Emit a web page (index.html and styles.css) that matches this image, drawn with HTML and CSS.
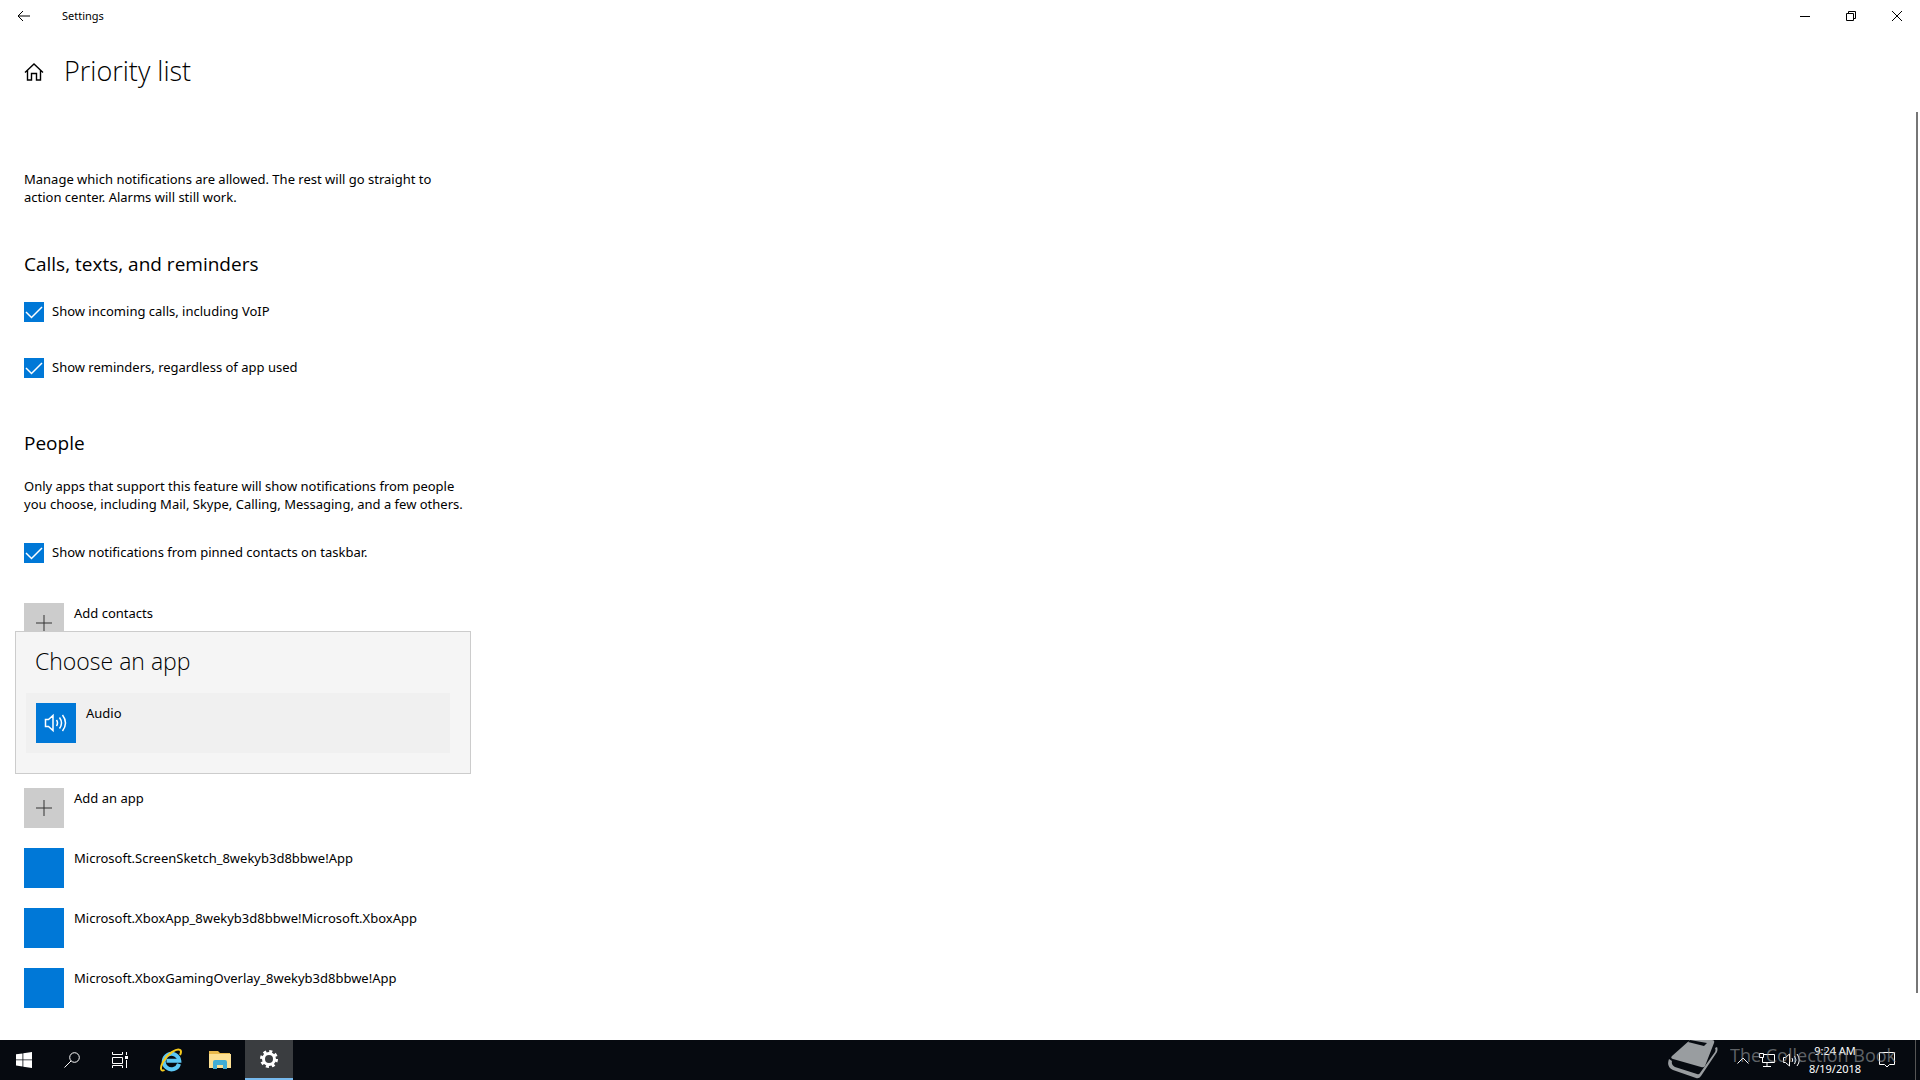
FILE: index.html
```html
<!doctype html>
<html lang="en">
<head>
  <meta charset="UTF-8">
  <meta name="viewport" content="width=device-width, initial-scale=1">
  <title>Settings</title>
  <link rel="stylesheet" href="styles.css">
</head>
<body>
  <div class="window">
    <header class="titlebar">
      <button class="back" aria-label="Back">
        <svg width="14" height="12" viewBox="0 0 14 12"><path d="M13 6H1M6 1L1 6l5 5"/></svg>
      </button>
      <span class="app-name">Settings</span>
      <div class="window-buttons">
        <button aria-label="Minimize">
          <svg width="10" height="10" viewBox="0 0 10 10"><path d="M0 5.500h10"/></svg>
        </button>
        <button aria-label="Restore">
          <svg width="10" height="10" viewBox="0 0 10 10"><path d="M.5 2.500h7v7h-7zM2.500 2.500V.5h7v7h-2"/></svg>
        </button>
        <button aria-label="Close">
          <svg width="10" height="10" viewBox="0 0 10 10"><path d="M0 0l10 10M10 0L0 10"/></svg>
        </button>
      </div>
    </header>

    <div class="page-head">
      <a class="home" href="#" aria-label="Home">
        <svg width="20" height="20" viewBox="0 0 20 20"><path d="M1 10.500L10 2l9 8.500M3.500 8.500v9.500h4v-6.500h5V18h4V8.500"/></svg>
      </a>
      <h1>Priority list</h1>
    </div>

    <div class="scroll-area">
      <main class="content">
        <p>Manage which notifications are allowed. The rest will go straight to action center. Alarms will still work.</p>

        <section class="calls">
          <h2>Calls, texts, and reminders</h2>
          <div class="check">
            <input type="checkbox" id="calls" checked>
            <label for="calls">Show incoming calls, including VoIP</label>
          </div>
          <div class="check">
            <input type="checkbox" id="reminders" checked>
            <label for="reminders">Show reminders, regardless of app used</label>
          </div>
        </section>

        <section class="people">
          <h2>People</h2>
          <p>Only apps that support this feature will show notifications from people you choose, including Mail, Skype, Calling, Messaging, and a few others.</p>
          <div class="check">
            <input type="checkbox" id="pinned" checked>
            <label for="pinned">Show notifications from pinned contacts on taskbar.</label>
          </div>
          <button class="item">
            <span class="tile add"><svg width="16" height="16" viewBox="0 0 16 16"><path d="M8 0v16M0 8h16"/></svg></span>
            <span class="name">Add contacts</span>
          </button>
        </section>

        <section class="apps">
          <button class="item">
            <span class="tile add"><svg width="16" height="16" viewBox="0 0 16 16"><path d="M8 0v16M0 8h16"/></svg></span>
            <span class="name">Add an app</span>
          </button>
          <button class="item"><span class="tile"></span><span class="name">Microsoft.ScreenSketch_8wekyb3d8bbwe!App</span></button>
          <button class="item"><span class="tile"></span><span class="name">Microsoft.XboxApp_8wekyb3d8bbwe!Microsoft.XboxApp</span></button>
          <button class="item"><span class="tile"></span><span class="name">Microsoft.XboxGamingOverlay_8wekyb3d8bbwe!App</span></button>

          <!-- app picker, opens above the Add an app button -->
          <div class="picker" role="dialog" aria-labelledby="picker-title">
            <h3 id="picker-title">Choose an app</h3>
            <button class="item">
              <span class="tile audio">
                <svg width="24" height="20" viewBox="0 0 24 20"><path d="M1.500 6.500h3L9 2.500v15l-4.500-4H1.500zM12.500 7q2 3 0 6M15.500 4.500q4 5.500 0 11M18.500 2q6 8 0 16"/></svg>
              </span>
              <span class="name">Audio</span>
            </button>
          </div>
        </section>
      </main>
      <div class="scrollbar"></div>
    </div>
  </div>

  <footer class="taskbar">
    <div class="tasks">
      <button aria-label="Start">
        <svg width="16" height="16" viewBox="0 0 16 16"><path class="solid" d="M0 2.300L6.500 1.400V7.500H0zM7.300 1.300L16 0v7.500H7.300zM0 8.300h6.500v6.200L0 13.600zM7.300 8.300H16V16l-8.700-1.300z"/></svg>
      </button>
      <button aria-label="Search">
        <svg width="16" height="16" viewBox="0 0 16 16"><circle cx="10.500" cy="5.500" r="4.800"/><path d="M7 9L.5 15.500"/></svg>
      </button>
      <button aria-label="Task View">
        <svg width="16" height="16" viewBox="0 0 16 16"><path d="M.5 0v2.500h10V0M.5 5.500h10v6H.5zM.5 16v-2.500h10V16M14.500 0v3M14.500 8v8"/><path class="solid" d="M13 4h3v3h-3z"/></svg>
      </button>
      <div class="pinned">
        <button aria-label="Internet Explorer">
          <svg width="24" height="24" viewBox="0 0 24 24">
            <path class="ie" d="M20 15.800A7.800 7.800 0 1 1 20.300 12.800H7.500"/>
            <path class="ring" d="M5.500 22C2 24 .5 20.500 4 14 9 5 18 0 21 2q2 1 0 5"/>
          </svg>
        </button>
        <button aria-label="File Explorer">
          <svg width="22" height="20" viewBox="0 0 22 20">
            <path fill="#e8b94c" stroke="none" d="M0 1h9l2 2h10v4H0z"/>
            <path fill="#fce093" stroke="none" d="M0 4h22v14H0z"/>
            <path fill="#42add4" stroke="none" d="M4 19v-7q0-2 2-2h10q2 0 2 2v7h-4v-4H8v4z"/>
          </svg>
        </button>
        <button class="active" aria-label="Settings">
          <svg width="18" height="18" viewBox="0 0 18 18"><circle class="gear" cx="9" cy="9" r="5.500"/><circle class="teeth" cx="9" cy="9" r="7.500"/></svg>
        </button>
      </div>
    </div>
    <div class="tray">
      <button class="tray-up" aria-label="Show hidden icons">
        <svg width="12" height="7" viewBox="0 0 12 7"><path d="M.5 6.500L6 1l5.500 5.500"/></svg>
      </button>
      <button aria-label="Network">
        <svg width="16" height="14" viewBox="0 0 16 14"><path d="M4.500 1.500h11v8H3.500V5M.5.5h4v4h-4zM4 13.500h8M8 10v3"/></svg>
      </button>
      <button aria-label="Volume">
        <svg width="17" height="14" viewBox="0 0 17 14"><path d="M.5 4.500h2l4-3.500v12l-4-3.500h-2zM9 5q1.500 2 0 4M11.500 3q3 4 0 8M14 1q4.500 6 0 12"/></svg>
      </button>
      <button class="clock">9:24 AM<br>8/19/2018</button>
      <button class="notes" aria-label="Action center">
        <svg width="16" height="16" viewBox="0 0 16 16"><path d="M.5.5h15v12h-5L8 15l-2.500-2.500h-5z"/></svg>
      </button>
      <div class="show-desktop"></div>
    </div>
    <div class="watermark">
      <svg width="50" height="39" viewBox="0 0 50 39">
        <path d="M22 0h22q3 0 2 3l-9 23q-1 2-4 1L5 19q-3-1-1-3z"/>
        <path d="M1 19Q-2 27 5 30l23 8q3 1 5-2L49 12q1-3 0-5l-2 1q1 2 0 4L32 33q-1 2-3 1L7 27q-4-2-3-6z"/>
        <path class="slot" d="M22 0l17 3-3 3-16-4z"/>
      </svg>
      <span>The Collection Book</span>
    </div>
  </footer>
</body>
</html>
```
FILE: styles.css
```css
* {
  box-sizing: border-box;
}
body {
  margin: 0;
  min-height: 100vh;
  display: flex;
  flex-direction: column;
  background-color: #fff;
  color: #000;
  font-family: "Noto Sans", "Open Sans", sans-serif;
  font-size: 13px;
  line-height: 18px;
}
h1, h2, h3, p {
  margin: 0;
  font-weight: normal;
}
h1, h2, h3 {
  font-family: "Open Sans", sans-serif;
}
button {
  margin: 0;
  padding: 0;
  border: 0;
  background: none;
  color: inherit;
  font: inherit;
  text-align: left;
}
svg {
  display: block;
  fill: none;
  stroke: currentColor;
}
.window {
  flex: 1;
  display: flex;
  flex-direction: column;
}

/* title bar */
.titlebar {
  display: flex;
  align-items: center;
  height: 32px;
  font-size: 11px;
}
.back {
  width: 62px;
  padding-left: 17px;
}
.window-buttons {
  display: flex;
  margin-left: auto;
}
.window-buttons button {
  width: 46px;
  padding-left: 18px;
}
.page-head {
  display: flex;
  align-items: center;
  gap: 20px;
  height: 80px;
  padding-left: 24px;
}
.home {
  color: #000;
}
.home svg {
  stroke-width: 1.4;
}
h1 {
  padding-bottom: 2px;
  font-size: 27px;
  font-weight: 300;
  line-height: 36px;
}

/* settings */
.scroll-area {
  flex: 1;
  display: flex;
  justify-content: space-between;
}
.content {
  width: 480px;
  padding: 58px 8px 0 24px;
}
h2 {
  font-size: 19px;
  line-height: 28px;
}
.calls {
  margin-top: 44px;
}
.check {
  display: flex;
  gap: 8px;
  height: 20px;
}
.calls .check {
  margin-top: 24px;
}
.calls .check + .check {
  margin-top: 36px;
}
.check input {
  appearance: none;
  margin: 0;
  width: 20px;
  height: 20px;
  background-color: #0078d7;
}
.check input:checked {
  background-image: url("data:image/svg+xml,%3Csvg xmlns='http://www.w3.org/2000/svg' viewBox='0 0 20 20'%3E%3Cpath d='M2 10l5.500 5.500L18 5' fill='none' stroke='white' stroke-width='1.500'/%3E%3C/svg%3E");
}
.people {
  margin-top: 51px;
}
.people p {
  margin-top: 20px;
}
.people .check {
  margin-top: 30px;
}
.item {
  display: flex;
  gap: 10px;
  width: 100%;
  height: 40px;
}
.people .item {
  margin-top: 40px;
}
.name {
  padding-top: 1px;
}
.tile {
  display: flex;
  align-items: center;
  justify-content: center;
  width: 40px;
  height: 40px;
  background-color: #0078d7;
  color: #fff;
}
.tile.add {
  background-color: #ccc;
  color: #333;
}
.tile.audio {
  stroke-width: 1.5;
}
.apps {
  position: relative;
  display: grid;
  gap: 20px;
  margin-top: 145px;
}
.picker {
  position: absolute;
  left: -9px;
  bottom: 234px;
  width: 456px;
  padding: 11px 20px 20px 10px;
  border: 1px solid #ccc;
  background-color: #f5f5f5;
}
.picker h3 {
  padding-left: 9px;
  font-size: 23px;
  font-weight: 300;
  line-height: 36px;
}
.picker .item {
  height: 60px;
  margin-top: 14px;
  padding: 10px;
  background-color: #f0f0f0;
}
.scrollbar {
  width: 2px;
  margin: 0 2px 47px 0;
  background-color: #767676;
}

/* taskbar */
.taskbar {
  position: relative;
  display: flex;
  justify-content: space-between;
  height: 40px;
  background-color: #060a10;
  color: #fff;
}
.tasks, .tray, .pinned {
  display: flex;
}
.pinned {
  gap: 1px;
  margin-left: 3px;
}
.tasks button {
  display: flex;
  align-items: center;
  justify-content: center;
  width: 48px;
}
.tasks .active {
  border-bottom: 2px solid #76b9ed;
  background-color: #3a3d40;
}
.solid {
  fill: #fff;
  stroke: none;
}
.ie {
  stroke: #5cc8f5;
  stroke-width: 4;
}
.ring {
  stroke: #f5c91c;
  stroke-width: 2;
}
.gear {
  stroke-width: 3;
}
.teeth {
  stroke-width: 3;
  stroke-dasharray: 3 2.89;
}
.tray {
  align-items: center;
  font-size: 11px;
  line-height: 18px;
}
.tray button {
  width: 24px;
}
.tray .tray-up {
  width: 22px;
}
.tray .clock {
  width: 56px;
  text-align: center;
}
.tray .notes {
  width: 52px;
  padding-left: 16px;
}
.show-desktop {
  width: 5px;
  height: 40px;
  border-left: 1px solid #555;
}
.watermark {
  position: absolute;
  right: 24px;
  top: 0;
  display: flex;
  gap: 12px;
  color: #999da0;
  font-family: "Open Sans", sans-serif;
  font-size: 18px;
  line-height: 30px;
  pointer-events: none;
}
.watermark svg {
  fill: #999da0;
  stroke: none;
}
.watermark .slot {
  fill: #060a10;
}
.watermark span {
  opacity: 0.6;
}
```
